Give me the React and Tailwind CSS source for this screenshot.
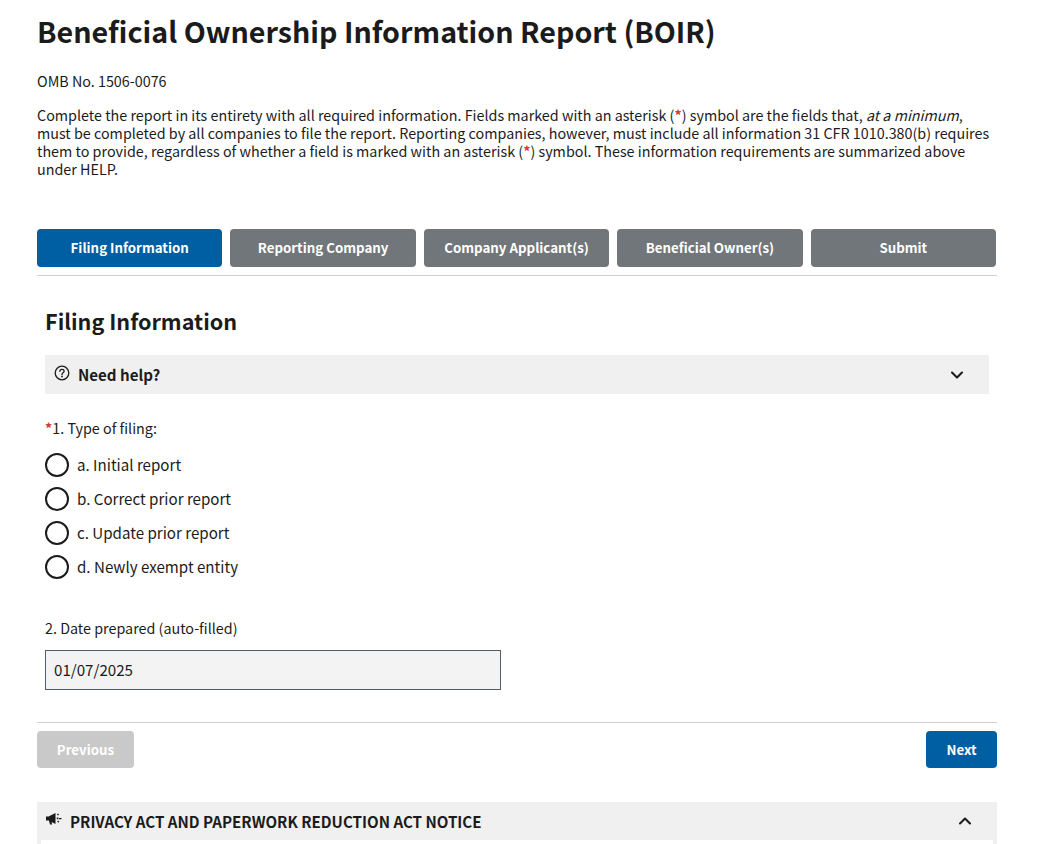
import { ChevronDown, ChevronUp } from 'lucide-react'

const tabs = ['Filing Information', 'Reporting Company', 'Company Applicant(s)', 'Beneficial Owner(s)', 'Submit']
const filingTypes = ['a. Initial report', 'b. Correct prior report', 'c. Update prior report', 'd. Newly exempt entity']
const sans = { fontFamily: '"Noto Sans CJK SC", "Noto Sans", sans-serif' }

function Asterisk() {
  return <span className="text-[#d83933] font-bold">*</span>
}

function HelpIcon() {
  return (
    <svg width="16" height="16" viewBox="0 0 16 16" fill="none" stroke="#1b1b1b" strokeWidth="1.3">
      <circle cx="8" cy="8" r="6.8" />
      <path d="M5.9 6.3c0-1.2 1-2 2.1-2s2.1.8 2.1 1.9c0 1.5-2.1 1.6-2.1 3.2" strokeLinecap="round" />
      <circle cx="8" cy="11.5" r=".9" fill="#1b1b1b" stroke="none" />
    </svg>
  )
}

function MegaphoneIcon() {
  return (
    <svg width="16" height="14" viewBox="0 0 16 14" fill="#1b1b1b">
      <path d="M0 4.5h3v4H0zM3 4.2L9.5 1v11L3 8.8zM3 9h2.2l1 3.5H4z" />
      <path d="M10.8 5.6h1.6v1.6h-1.6zM11.8 1.6l1.3.7-1 1.3-1.1-.8zM13 6h2.5v1.2H13zM11.2 9.4l1-.9 1.1 1.3-1 .9z" />
    </svg>
  )
}

export default function App() {
  return (
    <div className="h-[844px] overflow-hidden bg-white text-[#1b1b1b] text-[14.33px]" style={sans}>
      <div className="w-[960px] ml-[37px]">
        <h1 className="text-[28.67px] font-bold leading-[40px] pt-[11px]">Beneficial Ownership Information Report (BOIR)</h1>
        <p className="mt-[20px] leading-[20px]">OMB No. 1506-0076</p>
        <p className="mt-[15px] leading-[18px]">
          Complete the report in its entirety with all required information. Fields marked with an asterisk (<Asterisk />) symbol are the fields that, <em>at a minimum</em>, must be completed by all companies to file the report. Reporting companies, however, must include all information 31 CFR 1010.380(b) requires them to provide, regardless of whether a field is marked with an asterisk (<Asterisk />) symbol. These information requirements are summarized above under HELP.
        </p>

        <div className="flex gap-2 mt-[51px] pb-2 pr-px border-b border-[#d0d0d0]">
          {tabs.map((tab, i) => (
            <div
              key={tab}
              className={`flex-1 h-[38px] rounded flex items-center justify-center text-white text-[13.3px] font-bold ${i === 0 ? 'bg-[#005ea2]' : 'bg-[#71767a]'}`}
            >
              {tab}
            </div>
          ))}
        </div>

        <div className="px-2">
          <h2 className="text-[21.6px] font-bold leading-[30px] mt-[30px]">Filing Information</h2>
          <div className="flex items-center justify-between h-[39px] mt-[19px] bg-[#f0f0f0] pl-[9px] pr-[22px]">
            <div className="flex items-center gap-[8px]">
              <span className="-mt-1"><HelpIcon /></span>
              <span className="text-[15.12px] font-bold">Need help?</span>
            </div>
            <ChevronDown size={20} strokeWidth={2.5} />
          </div>

          <p className="mt-[24px] leading-[20px]"><Asterisk />1. Type of filing:</p>
          <div className="mt-[15px] flex flex-col gap-[10px]">
            {filingTypes.map(type => (
              <div key={type} className="flex items-center gap-[8px] h-[24px]">
                <span className="w-[24px] h-[24px] rounded-full border-2 border-[#1b1b1b] bg-white" />
                <span className="text-[15.12px] pb-[2px]">{type}</span>
              </div>
            ))}
          </div>

          <p className="mt-[39px] leading-[20px]">2. Date prepared (auto-filled)</p>
          <div className="mt-[12px] w-[456px] h-[40px] bg-[#f3f3f3] border border-[#565c65] flex items-center pl-2 pb-[2px] text-[15.12px]">
            01/07/2025
          </div>
        </div>

        <div className="mt-[32px] border-t border-[#d0d0d0] pt-2 flex justify-between">
          <div className="w-[97px] h-[37px] rounded bg-[#c9c9c9] text-white text-[13.3px] font-bold flex items-center justify-center">Previous</div>
          <div className="w-[71px] h-[37px] rounded bg-[#005ea2] text-white text-[13.3px] font-bold flex items-center justify-center">Next</div>
        </div>

        <div className="mt-[34px] bg-[#f0f0f0] h-[38px] pl-[9px] pr-[22px] flex items-center justify-between">
          <div className="flex items-center gap-[8px]">
            <span className="-mt-1"><MegaphoneIcon /></span>
            <span className="text-[15.12px] font-bold">PRIVACY ACT AND PAPERWORK REDUCTION ACT NOTICE</span>
          </div>
          <ChevronUp size={20} strokeWidth={2.5} />
        </div>
        <div className="h-[20px] border-x-4 border-[#f0f0f0]" />
      </div>
    </div>
  )
}
